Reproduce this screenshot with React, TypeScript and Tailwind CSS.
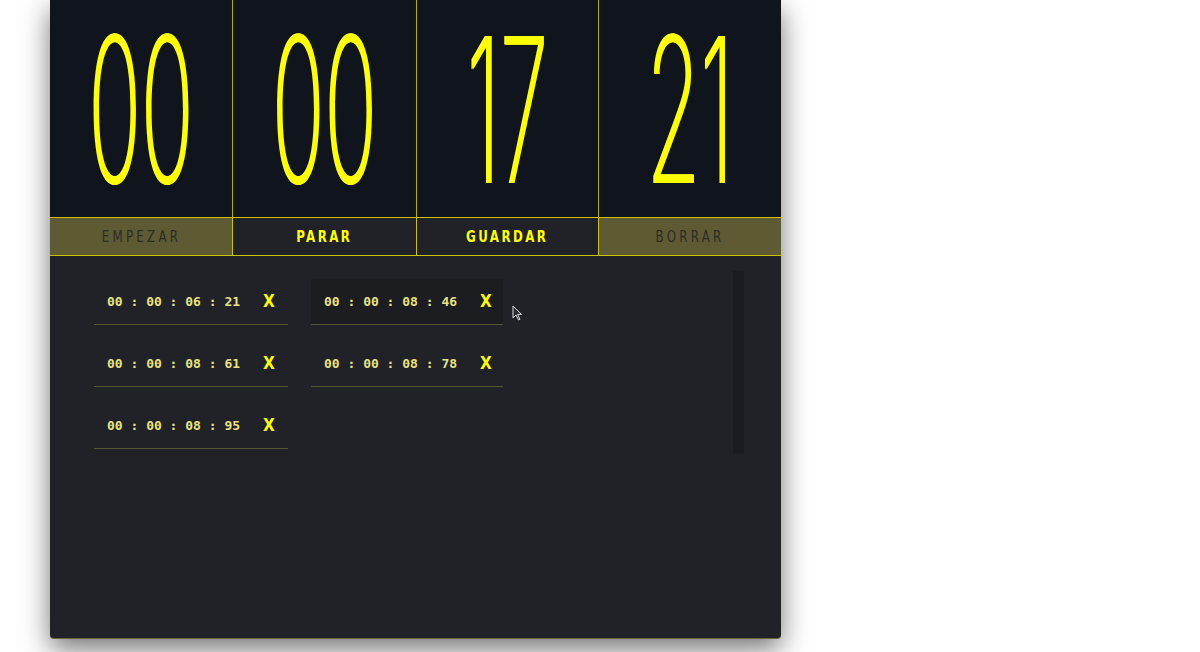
import React from "react";

const digitShadow =
  "[text-shadow:0.8px_0_0_#ffff00,-0.8px_0_0_#ffff00]";

function DigitCell({ value, first }: { value: string; first?: boolean }) {
  return (
    <div
      className={`flex h-[217px] items-center justify-center overflow-hidden ${
        first ? "" : "border-l border-[#b4ae00]"
      }`}
    >
      <span
        className={`inline-block origin-center translate-y-[1px] scale-y-[2.33] text-[87px] leading-[87px] text-[#ffff00] [font-family:Inter,sans-serif] font-extralight ${digitShadow}`}
      >
        {value}
      </span>
    </div>
  );
}

function Btn({ label, active, first }: { label: string; active?: boolean; first?: boolean }) {
  return (
    <div
      className={`flex h-[37px] items-center justify-center ${first ? "" : "border-l border-[#c8c200]"} ${
        active ? "bg-[#212227]" : "bg-[#5e5a33]"
      }`}
    >
      <span
        className={`inline-block scale-x-[0.82] text-[16px] leading-[20px] [font-family:'DejaVu_Sans',sans-serif] [font-stretch:condensed] ${
          active
            ? "font-bold tracking-[3px] text-[#ffff00]"
            : "font-normal tracking-[4px] text-[#2c2c24]"
        }`}
      >
        {label}
      </span>
    </div>
  );
}

function Lap({ t, hover }: { t: string; hover?: boolean }) {
  return (
    <div
      className={`flex h-[46px] items-center border-b border-[#57543a] pl-[13px] ${
        hover ? "bg-[#1b1d21]" : ""
      }`}
    >
      <span className="text-[13px] font-bold text-[#e9e37e] [font-family:'DejaVu_Sans_Mono',monospace] whitespace-pre">
        {t}
      </span>
      <span className="ml-[23px] text-[17px] font-bold text-[#ffff00] [font-family:'DejaVu_Sans',sans-serif] [font-stretch:condensed]">
        X
      </span>
    </div>
  );
}

export default function App() {
  return (
    <div className="min-h-[652px] w-[1200px] bg-white">
      <div className="relative ml-[50px] flex h-[639px] w-[731px] flex-col overflow-hidden rounded-b-[4px] border-b border-[#6a6838] bg-[#212227] shadow-[0_10px_28px_rgba(0,0,0,0.55)]">
        <div className="grid grid-cols-[182px_184px_182px_183px] bg-[#10151d]">
          <DigitCell value="00" first />
          <DigitCell value="00" />
          <DigitCell value="17" />
          <DigitCell value="21" />
        </div>
        <div className="grid grid-cols-[182px_184px_182px_183px] border-y border-[#c8c200]">
          <Btn label="EMPEZAR" first />
          <Btn label="PARAR" active />
          <Btn label="GUARDAR" active />
          <Btn label="BORRAR" />
        </div>
        <div className="flex flex-1">
          <div className="flex-1 pl-[44px] pt-[23px]">
            <div className="grid w-[409px] grid-cols-[194px_192px] gap-x-[23px] gap-y-[16px]">
              <Lap t="00 : 00 : 06 : 21" />
              <Lap t="00 : 00 : 08 : 46" hover />
              <Lap t="00 : 00 : 08 : 61" />
              <Lap t="00 : 00 : 08 : 78" />
              <Lap t="00 : 00 : 08 : 95" />
            </div>
          </div>
          <div className="mr-[37px] mt-[15px] h-[183px] w-[11px] bg-[#1a1c20]" />
        </div>
        <svg
          className="absolute left-[462px] top-[305px]"
          width="11"
          height="16"
          viewBox="0 0 11 16"
        >
          <path d="M1 1 L1 13 L4 10 L6.5 15 L8 14.3 L5.6 9.4 L9.5 9.4 Z" fill="#2a2c30" stroke="#d8d8d8" strokeWidth="1" />
        </svg>
      </div>
    </div>
  );
}
